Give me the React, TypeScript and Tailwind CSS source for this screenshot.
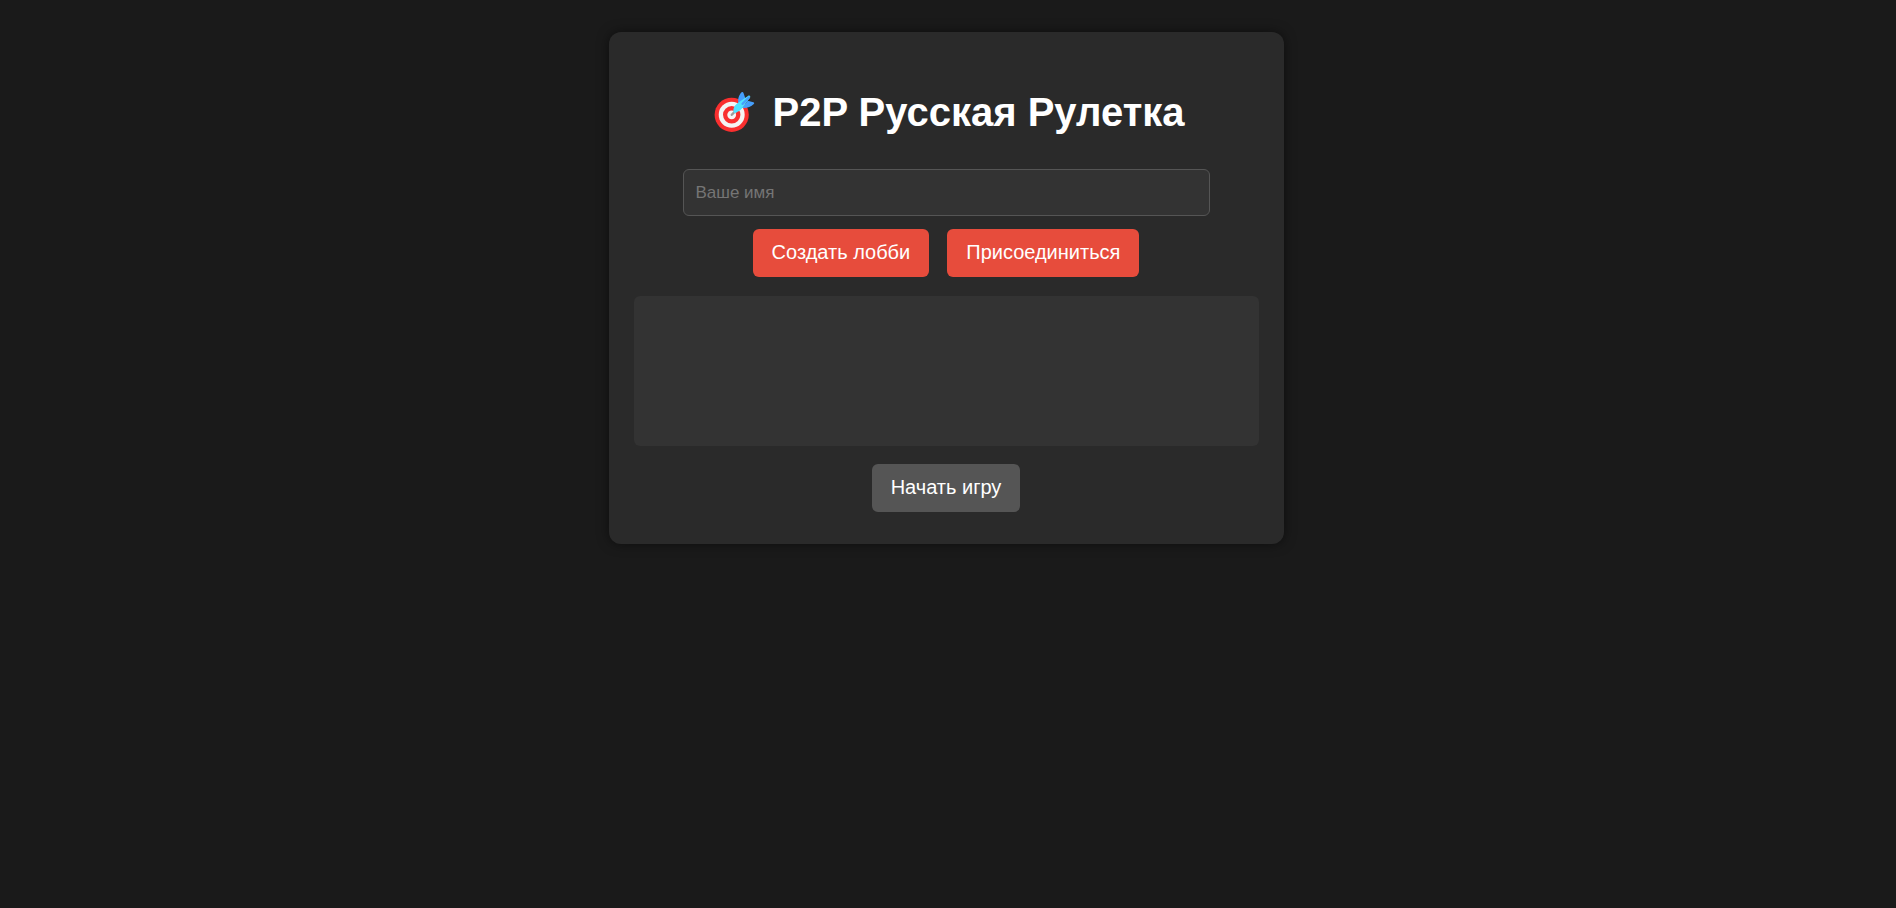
import React, { useState } from "react";

interface ActionButtonProps {
  children: React.ReactNode;
  onClick?: () => void;
  disabled?: boolean;
}

const ActionButton: React.FC<ActionButtonProps> = ({ children, onClick, disabled }) => (
  <button
    type="button"
    onClick={onClick}
    disabled={disabled}
    className="h-12 px-[19px] pb-0.5 rounded-md bg-[#e74c3c] text-white text-xl leading-6 cursor-pointer disabled:bg-[#555] disabled:cursor-not-allowed"
  >
    {children}
  </button>
);

const TargetIcon: React.FC = () => (
  <svg viewBox="-1 0 52 44" className="w-[52px] h-11 shrink-0" aria-hidden="true">
    <circle cx="22.7" cy="23.8" r="17.1" fill="#f92f2f" />
    <circle cx="22.7" cy="23.8" r="13" fill="#f4f4f4" />
    <circle cx="22.7" cy="23.8" r="8.7" fill="#f92f2f" />
    <circle cx="22.7" cy="23.8" r="4.4" fill="#f4f4f4" />
    <path d="M22.8 23.8l3.4-3.6" stroke="#9b9b9b" strokeWidth="2.4" strokeLinecap="round" />
    {/* dart feathers */}
    <path d="M29.6 13C28.4 8.5 29.8 4.1 32.6 1.3C33.3 .7 34.1 .9 34.4 1.8L36.4 7.5L34 13.5Z" fill="#469ffc" />
    <path d="M32.8 16.9L38.8 9.8L44.3 11.2C45.3 11.5 45.5 12.3 44.8 13C41.7 16 37.5 17.5 32.8 16.9Z" fill="#469ffc" />
    {/* dart body */}
    <path d="M25.1 21.7c-1.1-1-1-3.6.1-5.7 1-1.9 3-3.6 4.6-4.7l9.2-6.4c1.6-1 3 .4 1.9 1.900l-6.600 8.600c-1.200 1.900-2.800 3.800-4.700 4.900-1.900 1.100-3.400 2.400-4.500 1.400z" fill="#50e2ff" />
    <path d="M33.500 12.900l6.500-6.500" stroke="#469ffc" strokeWidth="2.2" strokeLinecap="round" />
  </svg>
);

export default function App() {
  const [name, setName] = useState("");
  const [players, setPlayers] = useState<string[]>([]);

  const enterLobby = () => {
    if (name.trim()) setPlayers([name.trim()]);
  };

  return (
    <div className="min-h-screen bg-[#1a1a1a] py-8 pl-6 pr-7 text-white font-['Liberation_Sans',Arial,sans-serif]">
      <main className="w-full max-w-[675px] mx-auto px-[25px] pt-[57px] pb-8 flex flex-col items-center rounded-xl bg-[#2a2a2a] shadow-[0_0_12px_rgba(0,0,0,0.5)]">
        <h1 className="flex items-end justify-center gap-[13px] mb-[34px] text-[40px] leading-[46px] font-bold">
          <TargetIcon />
          P2P Русская Рулетка
        </h1>
        <input
          type="text"
          aria-label="Ваше имя"
          placeholder="Ваше имя"
          value={name}
          onChange={(e) => setName(e.target.value)}
          className="w-full max-w-[527px] h-[47px] px-3 rounded-md border border-[#555] bg-[#333] text-[17px] text-white placeholder:text-[#757575]"
        />
        <div className="mt-[13px] flex flex-wrap justify-center gap-[18px]">
          <ActionButton onClick={enterLobby}>Создать лобби</ActionButton>
          <ActionButton onClick={enterLobby}>Присоединиться</ActionButton>
        </div>
        <ul className="w-full min-h-[150px] mt-[19px] mb-[18px] p-3 rounded-md bg-[#333]">
          {players.map((player) => (
            <li key={player}>{player}</li>
          ))}
        </ul>
        <ActionButton disabled={players.length < 2}>Начать игру</ActionButton>
      </main>
    </div>
  );
}
